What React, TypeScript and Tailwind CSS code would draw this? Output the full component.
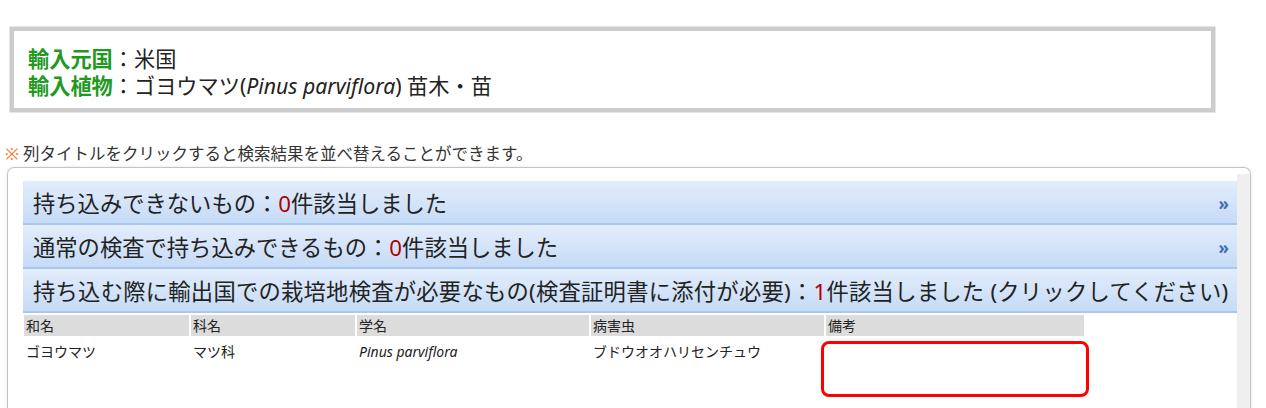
import React from "react";

const bars = [
  { pre: "持ち込みできないもの：", count: "0", post: "件該当しました", more: true, wide: false },
  { pre: "通常の検査で持ち込みできるもの：", count: "0", post: "件該当しました", more: true, wide: false },
  { pre: "持ち込む際に輸出国での栽培地検査が必要なもの(検査証明書に添付が必要)：", count: "1", post: "件該当しました (クリックしてください)", more: false, wide: true },
];

const cols = [
  { label: "和名", w: "w-[165px]", value: "ゴヨウマツ" },
  { label: "科名", w: "w-[164px]", value: "マツ科" },
  { label: "学名", w: "w-[232px]", value: "Pinus parviflora", italic: true },
  { label: "病害虫", w: "w-[233px]", value: "ブドウオオハリセンチュウ" },
  { label: "備考", w: "w-[258px]", value: "" },
];

const App: React.FC = () => {
  return (
    <div className="h-[408px] w-[1266px] overflow-hidden bg-white font-['Noto_Sans','Noto_Sans_CJK_JP',sans-serif] text-[#222]">
      <div className="pl-[10px] pt-[27px] pr-[51px]">
        <div className="border-4 border-[#cccccc] outline-1 outline-[#e6e6e6] pl-[14px] pt-[14px] pb-[9px] text-[21.2px] leading-[27px]">
          <div>
            <span className="font-bold text-[#1f9a1f]">輸入元国</span>：米国
          </div>
          <div>
            <span className="font-bold text-[#1f9a1f]">輸入植物</span>：ゴヨウマツ(<i>Pinus parviflora</i>) 苗木・苗
          </div>
        </div>
      </div>

      <div className="mt-[31px] pl-[5px] text-[16.5px] leading-[22px] text-[#333]">
        <span className="text-[#f07a2a]">※</span> 列タイトルをクリックすると検索結果を並べ替えることができます。
      </div>

      <div className="ml-[7px] mr-[15px] mt-[2px] flex h-[260px] rounded-t-[7px] border border-b-0 border-[#c4c4c4] shadow-[0_0_3px_rgba(0,0,0,0.12)]">
        <div className="flex-1 pl-[15px] pt-[13px]">
          {bars.map((b, i) => (
            <div
              key={i}
              className="flex h-[44px] items-center justify-between border-b-2 border-[#a7c7ef] bg-gradient-to-b from-[#e3edfb] to-[#c6dbf6] pl-[10px] pr-[8px] pt-[3px] text-[22.3px] text-[#222]"
            >
              <span className={`whitespace-nowrap ${b.wide ? "tracking-[0.25px]" : ""}`}>
                {b.pre}
                <span className="text-[#b00000]">{b.count}</span>
                {b.post}
              </span>
              {b.more && <span className="text-[17px] font-bold text-[#3d6fb3]">»</span>}
            </div>
          ))}

          <div className="relative mt-[2px] text-[14px] text-[#222]">
            <div className="ml-[1px] flex gap-[2px]">
              {cols.map((c) => (
                <div key={c.label} className={`${c.w} h-[21px] bg-[#dcdcdc] pl-[2px] leading-[21px]`}>
                  {c.label}
                </div>
              ))}
            </div>
            <div className="ml-[1px] mt-[4px] flex gap-[2px]">
              {cols.map((c) => (
                <div key={c.label} className={`${c.w} pl-[2px] leading-[24px] ${c.italic ? "italic" : ""}`}>
                  {c.value}
                </div>
              ))}
            </div>
            <div className="absolute left-[798px] top-[26px] h-[56px] w-[268px] rounded-[8px] border-[3px] border-[#ff0000]" />
          </div>
        </div>
        <div className="w-[13px] bg-[#efefef] mt-[6px]" />
      </div>
    </div>
  );
};

export default App;
